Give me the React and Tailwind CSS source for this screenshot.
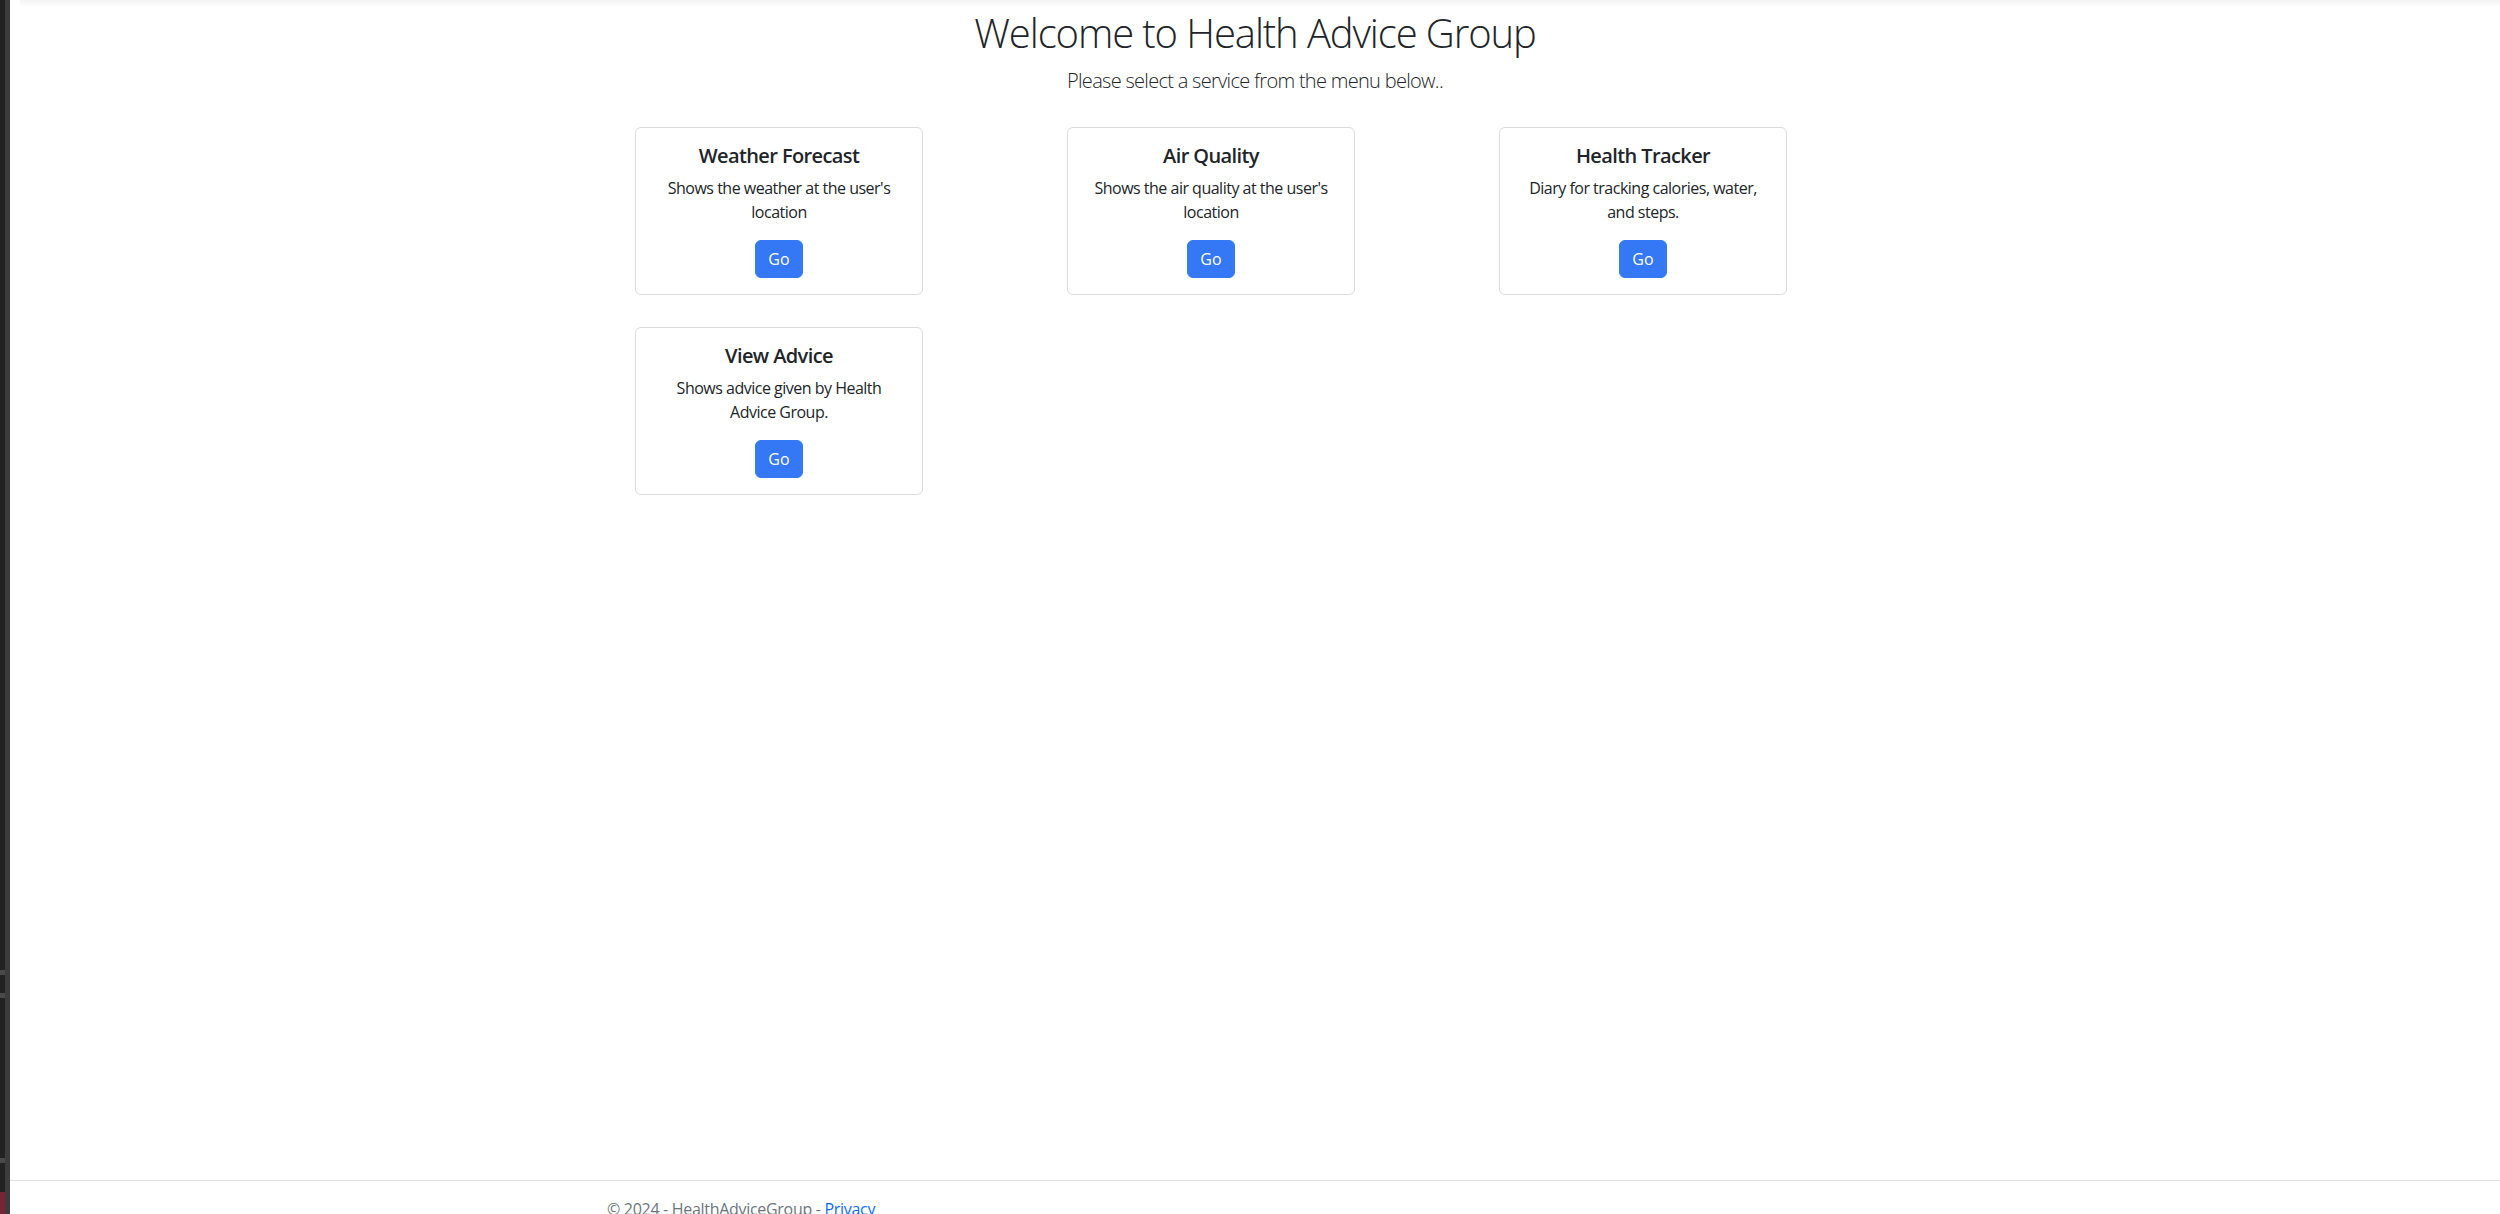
import React from 'react';

const services = [
  { title: 'Weather Forecast', lines: ["Shows the weather at the user's", 'location'] },
  { title: 'Air Quality', lines: ["Shows the air quality at the user's", 'location'] },
  { title: 'Health Tracker', lines: ['Diary for tracking calories, water,', 'and steps.'] },
  { title: 'View Advice', lines: ['Shows advice given by Health', 'Advice Group.'] },
];

function ServiceCard({ title, lines }) {
  return (
    <div className="w-[288px] border border-[#dcdcdc] rounded-[6px] bg-white">
      <div className="p-4 text-center">
        <h5 className="text-[20px] leading-[24px] font-semibold tracking-[-0.6px] text-[#212529] mb-2">{title}</h5>
        <p className="text-[16px] leading-[24px] tracking-[-0.5px] text-[#212529] mb-4">
          {lines.map((l, i) => (
            <span key={i} className="block whitespace-nowrap">{l}</span>
          ))}
        </p>
        <button className="h-[38px] px-3 rounded-[6px] bg-[#3478f6] text-white text-[16px] leading-[24px] border border-[#3478f6]">
          Go
        </button>
      </div>
    </div>
  );
}

export default function App() {
  return (
    <div className="flex h-[1214px] overflow-hidden bg-white font-['Segoe_UI','Open_Sans',sans-serif]">
      {/* editor sidebar peeking in */}
      <div className="w-[10px] flex shrink-0">
        <div className="w-[5px] bg-[#222222] flex flex-col">
          <div className="mt-[970px] h-[5px] bg-[#4a4a4a]" />
          <div className="mt-[18px] h-[5px] bg-[#4a4a4a]" />
          <div className="mt-[160px] h-[5px] bg-[#4a4a4a]" />
          <div className="mt-auto h-[22px] bg-[#7a2333]" />
        </div>
        <div className="w-[5px] bg-[#3c3c3c]" />
      </div>

      <div className="flex-1 flex flex-col h-[1240px]">
        <div className="h-[7px] ml-[10px] bg-gradient-to-b from-[#f3f3f3] to-white" />

        <div className="w-[1320px] mx-auto px-3">
          <div className="text-center">
            <h1 className="mt-[2px] text-[40px] leading-[48px] font-light tracking-[-1.1px] text-[#212529]">
              Welcome to Health Advice Group
            </h1>
            <p className="mt-[9px] text-[20px] leading-[30px] font-light tracking-[-0.7px] text-[#212529]">
              Please select a service from the menu below..
            </p>
          </div>

          <div className="ml-[28px] mt-[31px] grid grid-cols-[288px_288px_288px] gap-x-[144px] gap-y-[32px]">
            {services.map((s) => (
              <ServiceCard key={s.title} {...s} />
            ))}
          </div>
        </div>

        <footer className="mt-auto border-t border-[#dee2e6] h-[60px]">
          <div className="w-[1320px] mx-auto px-3 text-[16px] leading-[56px] tracking-[-0.3px] text-[#6c757d]">
            &copy; 2024 - HealthAdviceGroup - <a className="text-[#0d6efd]">Privacy</a>
          </div>
        </footer>
      </div>
    </div>
  );
}
